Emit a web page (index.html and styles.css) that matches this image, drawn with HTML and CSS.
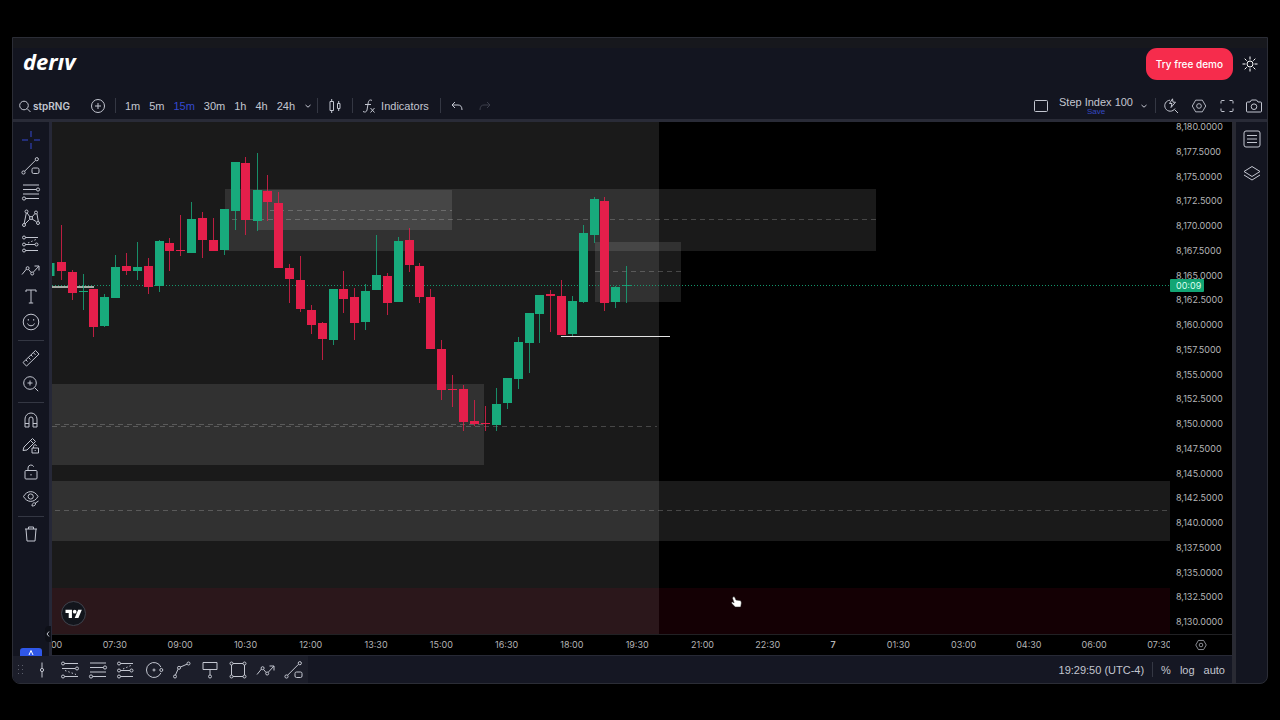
FILE: index.html
```html
<!DOCTYPE html>
<html lang="en">
<head>
<meta charset="utf-8">
<meta name="viewport" content="width=device-width, initial-scale=1">
<title>Deriv chart</title>
<link rel="stylesheet" href="styles.css">
</head>
<body>
<svg class="defs" aria-hidden="true">
  <symbol id="chev" viewBox="0 0 8 8"><path d="M1.500 3 4 5.200 6.500 3"/></symbol>
  <symbol id="cross" viewBox="0 0 20 20"><path d="M10 1v6M10 13v6M1 10h6M13 10h6"/></symbol>
  <symbol id="trend" viewBox="0 0 20 20"><path d="M3.500 15.300 14.500 4.300"/><circle cx="2.500" cy="16.500" r="1.600"/><circle cx="15.800" cy="3.200" r="1.600"/><rect x="11" y="12" width="7" height="5.500" rx="1.500"/></symbol>
  <symbol id="fib" viewBox="0 0 20 20"><path d="M2 3h16M2 7.500h13.500M2 12h16M4.500 16.500H18"/><circle cx="17" cy="7.500" r="1.600"/><circle cx="3" cy="16.500" r="1.600"/></symbol>
  <symbol id="pattern" viewBox="0 0 20 20"><path d="M3.200 15.500 5.300 5M6 4.800 9 9M11 9l3-3.500M16 6l1.300 7.500M15.500 13.800 11 11M8.700 11.300 4 16"/><circle cx="5.500" cy="3.500" r="1.500"/><circle cx="15" cy="4.500" r="1.500"/><circle cx="10" cy="10" r="1.500"/><circle cx="3" cy="17" r="1.500"/><circle cx="17" cy="15" r="1.500"/></symbol>
  <symbol id="position" viewBox="0 0 20 20"><path d="M4.500 3.500H17M4.500 10.500H14M4.500 16.500H17"/><path stroke-dasharray="1.500 2" d="M7 9l9-4"/><circle cx="3" cy="3.500" r="1.500"/><circle cx="3" cy="10.500" r="1.500"/><circle cx="3" cy="16.500" r="1.500"/><circle cx="15.500" cy="10.500" r="1.500"/></symbol>
  <symbol id="short" viewBox="0 0 20 20"><path d="M4.500 3.500H18M2 8.500h13M4.500 16.500H18"/><path stroke-dasharray="1.500 2" d="M5 10.500l11 4"/><circle cx="3" cy="3.500" r="1.500"/><circle cx="17" cy="8.500" r="1.500"/><circle cx="3" cy="16.500" r="1.500"/></symbol>
  <symbol id="zigzag" viewBox="0 0 20 20"><path d="M1 14.500 5.500 9M7.600 9.500l2.500 3M12.300 12.200 18 6M13.500 6H18v4.500"/><circle cx="6.600" cy="8.200" r="1.500"/><circle cx="11.200" cy="13.500" r="1.500"/></symbol>
  <symbol id="text" viewBox="0 0 20 20"><path d="M5 6V4h10v2M10 4v13M7.800 17h4.400"/></symbol>
  <symbol id="smile" viewBox="0 0 20 20"><circle cx="10" cy="10" r="7.800"/><path d="M6.500 11.500c1 3 6 3 7 0M7.300 7v1.600M12.700 7v1.600"/></symbol>
  <symbol id="ruler" viewBox="0 0 20 20"><path d="m2 14.500 12.500-12 3.500 3.600-12.500 12zM5 12l1.500 1.500M7.500 9.500 9.500 11.500M10 7l1.500 1.500M12.500 4.800l2 2"/></symbol>
  <symbol id="zoomin" viewBox="0 0 20 20"><circle cx="9" cy="9" r="6.300"/><path d="m13.700 13.700 3.500 3.500M9 6.500v5M6.500 9h5"/></symbol>
  <symbol id="magnet" viewBox="0 0 20 20"><path d="M4 17V9a6 6 0 0 1 12 0v8h-4V9a2 2 0 0 0-4 0v8zM4 13.500h4M12 13.500h4"/></symbol>
  <symbol id="penlock" viewBox="0 0 20 20"><path d="M2 14.500 3 11l8.500-8.500 3 3L6 14zM9.500 4.500l3 3M11 12h6.500v5H11zM12.500 12v-1.500a1.700 1.700 0 0 1 3.200-.8M14.200 14v1"/></symbol>
  <symbol id="lock" viewBox="0 0 20 20"><rect x="4" y="8.500" width="12" height="8.500" rx="1"/><path d="M7 8.500V6a3 3 0 0 1 5.700-1.300M10 12v1.500"/></symbol>
  <symbol id="eye" viewBox="0 0 20 20"><path d="M2.500 8.500C6 2 13.500 2 17 8.500 13.500 15 6 15 2.500 8.500z"/><circle cx="9.700" cy="8.500" r="2.600"/><path d="M11 18c0-3 2-3.500 3.500-3 .5 2-1 3-3.500 3zM14.500 15l3-2"/></symbol>
  <symbol id="trash" viewBox="0 0 20 20"><path d="M4 5h12M7.500 5V3h5v2M5 5l1 12h8l1-12"/></symbol>
  <symbol id="vline" viewBox="0 0 20 20"><path d="M10 2.500V8.500M10 11.500v6"/><circle cx="10" cy="10" r="1.600"/></symbol>
  <symbol id="circle" viewBox="0 0 20 20"><path d="M16.900 7.100a7.500 7.500 0 1 0 0 5.800"/><circle cx="10" cy="10" r="1"/><circle cx="17.300" cy="10" r="1.500"/></symbol>
  <symbol id="curve" viewBox="0 0 20 20"><path d="M3.500 15 6 9.200M8 7.200l7-3"/><circle cx="3" cy="16.500" r="1.500"/><circle cx="7" cy="7.800" r="1.500"/><circle cx="16.500" cy="3.500" r="1.500"/></symbol>
  <symbol id="callout" viewBox="0 0 20 20"><path d="M3 2.500h14v7H3zM10 9.500V15"/><circle cx="10" cy="16.500" r="1.500"/></symbol>
  <symbol id="rect" viewBox="0 0 20 20"><path d="M5 3.500h10M5 16.500h10M3.500 5v10M16.500 5v10"/><circle cx="3.500" cy="3.500" r="1.500"/><circle cx="16.500" cy="3.500" r="1.500"/><circle cx="3.500" cy="16.500" r="1.500"/><circle cx="16.500" cy="16.500" r="1.500"/></symbol>
  <symbol id="hex" viewBox="0 0 20 20"><path d="M6.300 3.500h7.400L17.500 10l-3.800 6.500H6.300L2.500 10z"/><circle cx="10" cy="10" r="2.600"/></symbol>
</svg>

<div class="app">
  <header class="header">
    <a class="logo" href="#" aria-label="deriv">derıv</a>
    <button class="demo" type="button">Try free demo</button>
    <button class="btn sun" type="button" aria-label="Theme"><svg class="icon" viewBox="0 0 20 20"><circle cx="10" cy="10" r="3"/><path d="M10 2.500v3M10 14.500v3M2.500 10h3M14.500 10h3M4.700 4.700l2 2M13.300 13.300l2 2M15.300 4.700l-2 2M6.700 13.300l-2 2"/></svg></button>
  </header>

  <nav class="toolbar" aria-label="Chart controls">
    <button class="btn symbol" type="button"><svg class="i14" viewBox="0 0 14 14"><circle cx="6" cy="6.500" r="4.300"/><path d="m9 9.500 3.500 3.500"/></svg>stpRNG</button>
    <button class="btn add" type="button" aria-label="Compare"><svg class="i16" viewBox="0 0 16 16"><circle cx="8" cy="8" r="6.500"/><path d="M8 5v6M5 8h6"/></svg></button>
    <span class="sep"></span>
    <div class="frames">
      <button class="btn" type="button">1m</button><button class="btn" type="button">5m</button><button class="btn on" type="button">15m</button><button class="btn" type="button">30m</button><button class="btn" type="button">1h</button><button class="btn" type="button">4h</button><button class="btn" type="button">24h</button><button class="btn" type="button" aria-label="More intervals"><svg class="i8"><use href="#chev"/></svg></button>
    </div>
    <span class="sep"></span>
    <button class="btn wide" type="button" aria-label="Chart type"><svg class="i16" viewBox="0 0 16 16"><path d="M3 3.500h3.500v9H3zM4.700 1v2.500M4.700 12.500V15M10.500 5.500h2.500v5h-2.500zM11.700 3v2.500M11.700 10.500V13"/></svg></button>
    <span class="sep"></span>
    <button class="btn indicators" type="button"><svg class="i16" viewBox="0 0 16 16"><path d="M11 2.500C8.500 1 7.500 3 7.200 5L6 12c-.4 2-2 2.500-4 1.500M4 6.500h6M9.500 10l4 4.500M13.500 10l-4 4.500"/></svg>Indicators</button>
    <span class="sep"></span>
    <button class="btn undo" type="button" aria-label="Undo"><svg class="i16" viewBox="0 0 16 16"><path d="M6 4 3 7l3 3M3 7h6c2.500 0 4 1.500 4 5"/></svg></button>
    <button class="btn redo" type="button" aria-label="Redo" disabled><svg class="i16" viewBox="0 0 16 16"><path d="m10 4 3 3-3 3M13 7H7c-2.500 0-4 1.500-4 5"/></svg></button>
    <div class="tools">
      <button class="btn" type="button" aria-label="Layout"><svg class="i16" viewBox="0 0 16 16"><rect x="1.500" y="2.500" width="13" height="11" rx="1"/></svg></button>
      <button class="btn save" type="button"><span>Step Index 100</span><small>Save</small></button>
      <button class="btn" type="button" aria-label="Layouts"><svg class="i8"><use href="#chev"/></svg></button>
      <span class="sep"></span>
      <div class="actions">
        <button class="btn" type="button" aria-label="Quick search"><svg class="i16" viewBox="0 0 16 16"><path d="M7 2.200a5.500 5.500 0 1 0 5 8.300M11.500 11.500 15 15M9.500.8 6.500 5.500H9L8 9.500l4.500-5.300H10z"/></svg></button>
        <button class="btn" type="button" aria-label="Settings"><svg class="i18"><use href="#hex"/></svg></button>
        <button class="btn" type="button" aria-label="Fullscreen"><svg class="i16" viewBox="0 0 16 16"><path d="M2 5.500V3.500q0-1 1-1h2.500M10.500 2.500H13q1 0 1 1v2M14 10.500v2q0 1-1 1h-2.500M5.500 13.500H3q-1 0-1-1v-2"/></svg></button>
        <button class="btn" type="button" aria-label="Snapshot"><svg class="i16" viewBox="0 0 16 16"><path d="M1.500 4H4l1.500-2h5L12 4h2.500q1 0 1 1v8q0 1-1 1h-13q-1 0-1-1V5q0-1 1-1z"/><circle cx="8" cy="8.700" r="2.800"/></svg></button>
      </div>
    </div>
  </nav>

  <div class="body">
    <div class="work">
      <div class="main">
        <aside class="side" aria-label="Drawing tools">
          <button class="btn on" type="button" aria-label="Cross"><svg class="icon"><use href="#cross"/></svg></button>
          <button class="btn" type="button" aria-label="Trend line"><svg class="icon"><use href="#trend"/></svg></button>
          <button class="btn" type="button" aria-label="Fibonacci"><svg class="icon"><use href="#fib"/></svg></button>
          <button class="btn" type="button" aria-label="Patterns"><svg class="icon"><use href="#pattern"/></svg></button>
          <button class="btn" type="button" aria-label="Positions"><svg class="icon"><use href="#position"/></svg></button>
          <button class="btn" type="button" aria-label="Path"><svg class="icon"><use href="#zigzag"/></svg></button>
          <button class="btn" type="button" aria-label="Text"><svg class="icon"><use href="#text"/></svg></button>
          <button class="btn" type="button" aria-label="Emoji"><svg class="icon"><use href="#smile"/></svg></button>
          <hr>
          <button class="btn" type="button" aria-label="Measure"><svg class="icon"><use href="#ruler"/></svg></button>
          <button class="btn" type="button" aria-label="Zoom in"><svg class="icon"><use href="#zoomin"/></svg></button>
          <hr>
          <button class="btn" type="button" aria-label="Magnet"><svg class="icon"><use href="#magnet"/></svg></button>
          <button class="btn" type="button" aria-label="Keep drawing"><svg class="icon"><use href="#penlock"/></svg></button>
          <button class="btn" type="button" aria-label="Lock drawings"><svg class="icon"><use href="#lock"/></svg></button>
          <button class="btn" type="button" aria-label="Hide drawings"><svg class="icon"><use href="#eye"/></svg></button>
          <hr>
          <button class="btn" type="button" aria-label="Remove"><svg class="icon"><use href="#trash"/></svg></button>
          <button class="up" type="button" aria-label="Scroll up"><svg class="i8" viewBox="0 0 8 8"><path d="M2 7 4 2.500 6 7"/></svg></button>
        </aside>
        <button class="fold" type="button" aria-label="Collapse tools"><svg viewBox="0 0 5 8"><path d="M4 1.500 2 4l2 2.500"/></svg></button>

        <section class="chart">
          <svg class="plot" viewBox="52 122 1118 512" preserveAspectRatio="xMinYMin slice" role="img" aria-label="Candlestick chart of Step Index 100">
            <rect x="52" y="122" width="607" height="512" fill="#1a1a1a"/>
            <g fill="#fff" fill-opacity=".1">
              <rect x="225" y="189" width="651" height="62"/>
              <rect x="257" y="190" width="195" height="40"/>
              <rect x="595" y="242" width="86" height="60"/>
              <rect x="52" y="384" width="432" height="81"/>
              <rect x="52" y="481" width="1118" height="60"/>
            </g>
            <rect x="52" y="588" width="1118" height="46" fill="#ff0032" fill-opacity=".08"/>
            <path class="dash" d="M232 219.500H876M270 210.500H452M595 271.500H681M55 424.500H484M52 426.500H657M55 510.500H1170"/>
            <path class="level old" d="M52 287H94"/>
            <path class="level" d="M561 336.500H670"/>
            <path class="last" d="M52 285.500H1170"/>
            <path class="wick up-c" d="M83.500 274V310M104.500 294V327M115.500 255V298M137.500 242V280M159.500 240V292M191.500 202V252M224.500 209V255M235.500 162V230M257.500 153V231M333.500 289V345M365.500 284V330M376.500 235V290M398.500 237V302M496.500 388V431M507.500 378V409M518.500 337V389M529.500 313V373M539.500 295V343M572.500 296V336M583.500 225V303M594.500 197V243M615.500 286V308M626.500 266V303M622 285.500H631"/>
            <path class="wick down-c" d="M61.500 225V280M72.500 270V300M93.500 289V337M126.500 253V275M148.500 258V294M169.500 238V271M180.500 215V256M202.500 212V258M213.500 218V251M245.500 157V235M267.500 175V221M278.500 192V267M289.500 264V303M300.500 256V312M311.500 305V334M322.500 322V360M343.500 271V313M354.500 288V340M387.500 273V315M409.500 228V272M419.500 263V303M430.500 289V349M441.500 340V400M452.500 375V407M463.500 385V431M474.500 400V426M485.500 406V431M550.500 290V332M561.500 280V335M604.500 197V311"/>
            <path class="candle up-c" d="M50 263V276M83.500 291V292M104.500 297V326M115.500 267V298M137.500 267V271M159.500 241V286M191.500 219V253M224.500 209V250M235.500 162V211M257.500 190V221M333.500 289V340M365.500 291V322M376.500 275V290M398.500 241V302M496.500 404V425M507.500 378V403M518.500 342V379M529.500 313V343M539.500 295V314M572.500 301V334M583.500 233V302M594.500 199V235M615.500 287V302"/>
            <path class="candle down-c" d="M61.500 262V271M72.500 272V293M93.500 289V327M126.500 266V271M148.500 266V287M169.500 243V251M180.500 250V251M202.500 218V240M213.500 240V251M245.500 163V220M267.500 191V202M278.500 203V268M289.500 268V279M300.500 280V309M311.500 310V325M322.500 323V339M343.500 289V299M354.500 297V323M387.500 276V303M409.500 240V265M419.500 266V297M430.500 297V349M441.500 349V390M452.500 389V390M463.500 389V422M474.500 421V424M485.500 423V424M550.500 294V296M561.500 296V335M604.500 201V303"/>
            <circle cx="73.500" cy="613.500" r="12" fill="#12151c" stroke="#40434d"/>
            <g fill="#fff" transform="translate(65.500 608) scale(.46)"><path d="M14 22H7V11H0V4h14v18zM28 22h-8l7.500-18h8L28 22z"/><circle cx="20" cy="8" r="4"/></g>
            <path fill="#fff" stroke="#222" stroke-width=".5" d="M733 597c1-.8 1.700 0 2 .8l1 2.200 3.500.5c1.600.3 2 1.300 1.800 3l-.6 3.500h-5.500l-3.300-3.500c-.8-1.200.3-1.800 1.200-1.200l1 .6-1.600-4.700z"/>
          </svg>
          <div class="prices">
            <span>8,180.0000</span><span>8,177.5000</span><span>8,175.0000</span><span>8,172.5000</span><span>8,170.0000</span><span>8,167.5000</span><span>8,165.0000</span><span>8,162.5000</span><span>8,160.0000</span><span>8,157.5000</span><span>8,155.0000</span><span>8,152.5000</span><span>8,150.0000</span><span>8,147.5000</span><span>8,145.0000</span><span>8,142.5000</span><span>8,140.0000</span><span>8,137.5000</span><span>8,135.0000</span><span>8,132.5000</span><span>8,130.0000</span>
            <b class="timer">00:09</b>
          </div>
          <div class="times">
            <div class="track"><span>06:00</span><span>07:30</span><span>09:00</span><span>10:30</span><span>12:00</span><span>13:30</span><span>15:00</span><span>16:30</span><span>18:00</span><span>19:30</span><span>21:00</span><span>22:30</span><span class="day">7</span><span>01:30</span><span>03:00</span><span>04:30</span><span>06:00</span><span>07:30</span></div>
          </div>
          <button class="btn corner" type="button" aria-label="Axis settings"><svg class="i14"><use href="#hex"/></svg></button>
        </section>
      </div>

      <footer class="bottom">
        <div class="favs">
          <svg class="grip" viewBox="0 0 6 10"><path d="M0 0h1v1H0zM4 0h1v1H4zM0 4h1v1H0zM4 4h1v1H4zM0 8h1v1H0zM4 8h1v1H4z"/></svg>
          <button class="btn" type="button" aria-label="Vertical line"><svg class="icon"><use href="#vline"/></svg></button>
          <button class="btn" type="button" aria-label="Short position"><svg class="icon"><use href="#short"/></svg></button>
          <button class="btn" type="button" aria-label="Fib retracement"><svg class="icon"><use href="#fib"/></svg></button>
          <button class="btn" type="button" aria-label="Long position"><svg class="icon"><use href="#position"/></svg></button>
          <button class="btn" type="button" aria-label="Circle"><svg class="icon"><use href="#circle"/></svg></button>
          <button class="btn" type="button" aria-label="Curve"><svg class="icon"><use href="#curve"/></svg></button>
          <button class="btn" type="button" aria-label="Callout"><svg class="icon"><use href="#callout"/></svg></button>
          <button class="btn" type="button" aria-label="Rectangle"><svg class="icon"><use href="#rect"/></svg></button>
          <button class="btn" type="button" aria-label="Path"><svg class="icon"><use href="#zigzag"/></svg></button>
          <button class="btn" type="button" aria-label="Trend line"><svg class="icon"><use href="#trend"/></svg></button>
        </div>
        <div class="status">
          <button class="btn" type="button">19:29:50 (UTC-4)</button>
          <span class="sep"></span>
          <div class="scale"><button class="btn" type="button">%</button><button class="btn" type="button">log</button><button class="btn" type="button">auto</button></div>
        </div>
      </footer>
    </div>

    <aside class="right" aria-label="Panels">
      <button class="btn" type="button" aria-label="Watchlist"><svg class="icon" viewBox="0 0 20 20"><rect x="2" y="2" width="16" height="16" rx="2"/><path d="M5 6.500h10M5 10h10M5 13.500h10"/></svg></button>
      <button class="btn" type="button" aria-label="Object tree"><svg class="icon" viewBox="0 0 20 20"><path d="m10 3.500 8 5-8 5-8-5zM2 12l8 5 8-5"/></svg></button>
    </aside>
  </div>
</div>
</body>
</html>
```
FILE: styles.css
```css
* { box-sizing: border-box; }

body {
  margin: 0;
  min-height: 100vh;
  padding: 37px 12px 36px;
  display: flex;
  background: #000;
  color: #c3c6d0;
  font: 11px/14px "Liberation Sans", Arial, sans-serif;
}

.defs { position: absolute; width: 0; height: 0; }

svg { fill: none; stroke: currentColor; flex: none; }
.icon { width: 20px; height: 20px; }
.i18 { width: 18px; height: 18px; }
.i16 { width: 16px; height: 16px; }
.i14 { width: 14px; height: 14px; }
.i8 { width: 8px; height: 8px; }

.btn {
  display: flex;
  align-items: center;
  justify-content: center;
  padding: 0;
  border: 0;
  background: none;
  color: inherit;
  font: inherit;
  white-space: nowrap;
}
.btn.on { color: #3549d0; }

.app {
  flex: 1;
  min-width: 0;
  display: flex;
  flex-direction: column;
  border: 1px solid #2b2d36;
  border-radius: 0 0 8px 8px;
  background: #131520;
  overflow: hidden;
}

.header {
  display: flex;
  align-items: center;
  height: 53px;
  padding: 0 7px 2px 10px;
  background: linear-gradient(#17181d 10px, #131520 10px);
}
.logo {
  margin-right: auto;
  padding-bottom: 6px;
  color: #fff;
  font: italic 700 22px/24px "Noto Sans", sans-serif;
  text-decoration: none;
}
.demo {
  height: 32px;
  padding: 0 10px;
  border: 0;
  border-radius: 11px;
  background: #f62c4c;
  color: #fff;
  font: 500 10px/14px Inter, sans-serif;
}
.sun { margin-left: 7px; color: #fff; }

.toolbar {
  display: flex;
  align-items: center;
  height: 31px;
  padding: 1px 5px 0;
  border-bottom: 3px solid #292b37;
}
.sep { width: 1px; height: 15px; background: #343743; }
.symbol { gap: 1px; font: 600 10px/14px Inter, sans-serif; }
.add { margin: 0 9px 0 20px; }
.frames { display: flex; gap: 9px; margin: 0 5px 0 9px; }
.wide { width: 34px; }
.indicators { gap: 4px; margin: 0 11px 0 8px; }
.undo { margin-left: 8px; }
.redo { margin-left: 12px; color: #3c3f4b; }
.tools { display: flex; align-items: center; margin-left: auto; gap: 7px; }
.save { flex-direction: column; padding: 0 0 1px 3px; }
.save span { line-height: 12px; }
.save small { color: #3549c4; font-size: 8px; line-height: 7px; }
.actions { display: flex; align-items: center; gap: 11px; }

.body { flex: 1; display: flex; }
.work { flex: 1; min-width: 0; display: flex; flex-direction: column; }
.main { position: relative; flex: 1; display: flex; }

.side {
  width: 39px;
  display: flex;
  flex-direction: column;
  align-items: center;
  padding-top: 5px;
  border-right: 3px solid #262837;
}
.side .btn { width: 26px; height: 26px; }
.side hr {
  width: 26px;
  height: 1px;
  margin: 5px 0 4px;
  border: 0;
  background: #343743;
}
.up {
  display: flex;
  justify-content: center;
  width: 22px;
  height: 8px;
  margin-top: auto;
  padding: 0;
  border: 0;
  border-radius: 3px 3px 0 0;
  background: #2f57e8;
  color: #fff;
}
.fold {
  position: absolute;
  left: 32px;
  bottom: 14px;
  width: 6px;
  height: 16px;
  padding: 0;
  border: 0;
  border-radius: 4px 0 0 4px;
  background: #0e1018;
  color: #c3c6d0;
}
.fold svg { display: block; width: 5px; height: 8px; }

.chart {
  flex: 1;
  min-width: 0;
  display: grid;
  grid-template-columns: minmax(0, 1fr) 62px;
  grid-template-rows: minmax(512px, 1fr) 21px;
  border-bottom: 1px solid #272935;
  background: #000;
}
.plot { width: 100%; height: 100%; stroke: none; }
.dash { stroke: #fff; stroke-opacity: .2; stroke-dasharray: 5 4; }
.level { stroke: #e4e4e4; }
.level.old { stroke: #a4aaa2; stroke-width: 2; }
.last { stroke: #14a676; stroke-opacity: .9; stroke-dasharray: 1 2; }
.wick { stroke-width: 1; stroke-opacity: .8; }
.candle { stroke-width: 9; }
.up-c { stroke: #18aa7c; }
.down-c { stroke: #e51f4b; }

.prices {
  position: relative;
  display: flex;
  flex-direction: column;
  justify-content: space-between;
  padding: 0 0 7px 6px;
  color: #b4b4b6;
  font: 9px/10px Inter, sans-serif;
}
.timer {
  position: absolute;
  left: 0;
  top: 157px;
  width: 34px;
  padding-left: 6px;
  border-radius: 1px;
  background: #12a574;
  color: #d8fff0;
  font-weight: 400;
  line-height: 13px;
}
.times {
  overflow: hidden;
  border-top: 1px solid #212124;
  color: #b4b4b6;
  font: 9px/20px Inter, sans-serif;
}
.track { display: flex; margin: 0 -22px 0 -35px; }
.track span { flex: 1; text-align: center; }
.track .day { font-weight: 600; }
.corner { border-top: 1px solid #212124; }

.bottom { display: flex; align-items: center; height: 27px; background: #151723; }
.favs {
  display: flex;
  align-items: center;
  height: 27px;
  padding-left: 5px;
  background: #1c1e2a;
}
.favs .btn { width: 28px; }
.grip { width: 6px; height: 10px; margin-right: 4px; fill: #5c606c; stroke: none; }
.status { display: flex; align-items: center; gap: 8px; margin-left: auto; padding-right: 7px; }
.scale { display: flex; gap: 9px; }

.right {
  width: 35px;
  display: flex;
  flex-direction: column;
  align-items: center;
  gap: 14px;
  padding-top: 7px;
  border-left: 4px solid #292a33;
}
```
